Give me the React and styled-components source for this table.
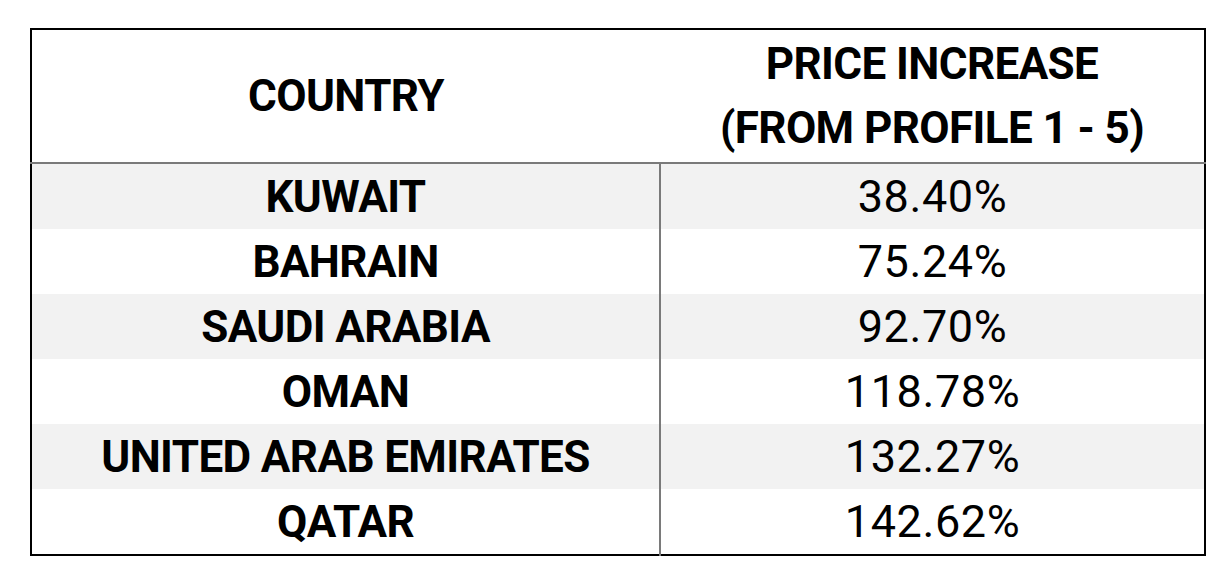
import React from "react";
import styled, { createGlobalStyle } from "styled-components";

const Global = createGlobalStyle`
  html, body { margin: 0; padding: 0; background: #ffffff; }
  body { font-family: Roboto, "Liberation Sans", sans-serif; color: #000; }
`;

const Page = styled.div`
  padding: 28px 0 0 30px;
`;

const Table = styled.table`
  width: 1176px;
  border-collapse: collapse;
  border: 2px solid #000;
  table-layout: fixed;
`;

const HeadCell = styled.th`
  height: 132px;
  padding: 0;
  font-weight: 700;
  font-size: 44px;
  line-height: 64px;
  letter-spacing: -0.6px;
  text-align: center;
  vertical-align: middle;
  border-bottom: 2px solid #7a7a7a;
  width: ${(p) => p.$w}px;
`;

const Row = styled.tr`
  background: ${(p) => (p.$alt ? "#f2f2f2" : "#ffffff")};
`;

const Cell = styled.td`
  height: 65px;
  padding: 0;
  text-align: center;
  vertical-align: middle;
  font-size: ${(p) => (p.$bold ? 44 : 45)}px;
  line-height: 44px;
  font-weight: ${(p) => (p.$bold ? 700 : 400)};
  letter-spacing: ${(p) => (p.$bold ? "-0.6px" : "0.6px")};
  border-right: ${(p) => (p.$bold ? "2px solid #7a7a7a" : "none")};
`;

const data = [
  ["KUWAIT", "38.40%"],
  ["BAHRAIN", "75.24%"],
  ["SAUDI ARABIA", "92.70%"],
  ["OMAN", "118.78%"],
  ["UNITED ARAB EMIRATES", "132.27%"],
  ["QATAR", "142.62%"],
];

export default function App() {
  return (
    <>
      <Global />
      <Page>
        <Table>
          <thead>
            <tr>
              <HeadCell $w={628}>COUNTRY</HeadCell>
              <HeadCell $w={544}>
                PRICE INCREASE
                <br />
                (FROM PROFILE 1 - 5)
              </HeadCell>
            </tr>
          </thead>
          <tbody>
            {data.map(([c, v], i) => (
              <Row key={c} $alt={i % 2 === 0}>
                <Cell $bold>{c}</Cell>
                <Cell>{v}</Cell>
              </Row>
            ))}
          </tbody>
        </Table>
      </Page>
    </>
  );
}
